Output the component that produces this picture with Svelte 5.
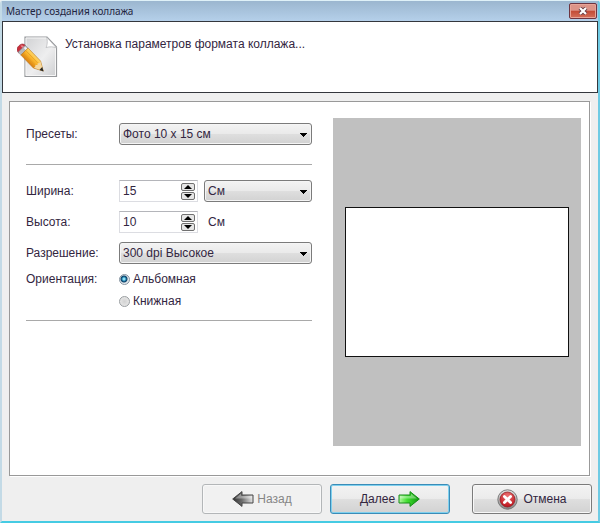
<script>
  let preset = $state('photo');
  let width = $state('15');
  let height = $state('10');
  let unit = $state('cm');
  let dpi = $state('300');
  let orientation = $state('landscape');

  const step = (value, by) => String(Math.max(1, (parseInt(value) || 0) + by));
  let ratio = $derived.by(() => {
    const a = Number(width) || 1;
    const b = Number(height) || 1;
    return orientation === 'landscape' ? Math.max(a, b) / Math.min(a, b) : Math.min(a, b) / Math.max(a, b);
  });
</script>

{#snippet spinner(id, value, set)}
  <div class="spin">
    <input {id} type="text" {value} oninput={(e) => set(e.currentTarget.value)} />
    <div class="arrows">
      <button type="button" aria-label="Больше" onclick={() => set(step(value, 1))}>
        <svg width="8" height="4" viewBox="0 0 8 4"><path d="M4 0L8 4H0Z" /></svg>
      </button>
      <button type="button" aria-label="Меньше" onclick={() => set(step(value, -1))}>
        <svg width="8" height="4" viewBox="0 0 8 4"><path d="M0 0H8L4 4Z" /></svg>
      </button>
    </div>
  </div>
{/snippet}

<div class="window">
  <div class="titlebar">
    <span>Мастер создания коллажа</span>
    <button class="close" type="button" aria-label="Закрыть">
      <svg width="10" height="8" viewBox="0 0 10 8">
        <path d="M2 1L8 7M8 1L2 7" stroke="#6b3d42" stroke-width="4" />
        <path d="M2 1L8 7M8 1L2 7" stroke="#fff" stroke-width="2.2" />
      </svg>
    </button>
  </div>

  <header>
    <svg width="42" height="42" viewBox="0 0 42 42" aria-hidden="true">
      <defs>
        <linearGradient id="sheet" x1="0" y1="0" x2="1" y2="1">
          <stop offset="0" stop-color="#d0d1d3" />
          <stop offset=".55" stop-color="#eeeeef" />
          <stop offset="1" stop-color="#cdced0" />
        </linearGradient>
        <linearGradient id="wood" x1="0" y1="0" x2="0" y2="1">
          <stop offset="0" stop-color="#ffd76a" />
          <stop offset=".45" stop-color="#fbb62c" />
          <stop offset="1" stop-color="#d97e0e" />
        </linearGradient>
      </defs>
      <path d="M8 1H30L39.500 11V40.500H8Z" fill="url(#sheet)" stroke="#96989b" stroke-width="1.2" />
      <path d="M9 2H29.500L38.500 11.500V39.500H9Z" fill="none" stroke="#f6f6f6" />
      <path d="M29.500 1C31 5 30 10 29 11.500C33 10.500 36 10.500 39.500 12Z" fill="#fff" stroke="#b0b1b4" stroke-width=".7" />
      <g transform="translate(4 12) rotate(46)">
        <path d="M2 -5C-2 -5 -3 -3 -3 0S-2 5 2 5Z" fill="#c9303c" stroke="#94303a" stroke-width=".6" />
        <path d="M1 -3.300C-1 -3.300 -2 -2 -2 -1H1Z" fill="#ec8288" />
        <rect x="1" y="-5" width="4" height="10" fill="#b5b8bd" stroke="#85878c" stroke-width=".5" />
        <path d="M2 -3H5" stroke="#f3f3f3" stroke-width="2" />
        <path d="M5 -5H23L32 0L23 5H5Z" fill="url(#wood)" stroke="#b8761c" stroke-width=".6" />
        <path d="M5 -1.600H23M5 2H23" stroke="#e29a20" stroke-width=".7" />
        <path d="M23 -4.600L32 0L23 4.600C24 3 23 1.700 22 1.500C24 .5 24 -1 22 -1.700C24 -2 24 -3 23 -4.600Z" fill="#f5d8a1" />
        <path d="M28.500 -2L32.500 0L28.500 2Z" fill="#282828" />
      </g>
    </svg>
    <p>Установка параметров формата коллажа...</p>
  </header>

  <main>
    <form>
      <div class="row">
        <label class="name" for="preset">Пресеты:</label>
        <select id="preset" bind:value={preset}><option value="photo">Фото 10 x 15 см</option></select>
      </div>
      <hr class="first" />
      <div class="row">
        <label class="name" for="width">Ширина:</label>
        {@render spinner('width', width, (v) => (width = v))}
        <select class="unit" aria-label="Единицы" bind:value={unit}><option value="cm">См</option></select>
      </div>
      <div class="row spaced">
        <label class="name" for="height">Высота:</label>
        {@render spinner('height', height, (v) => (height = v))}
        <span class="suffix">См</span>
      </div>
      <div class="row spaced">
        <label class="name" for="dpi">Разрешение:</label>
        <select id="dpi" bind:value={dpi}><option value="300">300 dpi Высокое</option></select>
      </div>
      <div class="orient" role="radiogroup" aria-labelledby="orient">
        <span class="name" id="orient">Ориентация:</span>
        <div>
          <label class="choice"><input type="radio" value="landscape" bind:group={orientation} />Альбомная</label>
          <label class="choice"><input type="radio" value="portrait" bind:group={orientation} />Книжная</label>
        </div>
      </div>
      <hr class="last" />
    </form>
    <div class="preview">
      <div class="paper" style:aspect-ratio={ratio}></div>
    </div>
  </main>

  <footer>
    <button class="push" type="button" disabled>
      <svg width="22" height="16" viewBox="0 0 22 16" aria-hidden="true">
        <defs>
          <linearGradient id="grey" x1="0" y1="0" x2="1" y2="0">
            <stop offset="0" stop-color="#303030" />
            <stop offset=".45" stop-color="#6b6b6b" />
            <stop offset="1" stop-color="#e6e6e6" />
          </linearGradient>
        </defs>
        <path d="M.7 8L10 .6V4H21V12H10V15.400Z" fill="url(#grey)" stroke="#444" stroke-linejoin="round" />
        <path d="M3 7.500L9 2.800V5H20V7.500Z" fill="#fff" opacity=".35" />
      </svg>
      <span>Назад</span>
    </button>
    <button class="push default" type="button">
      <span>Далее</span>
      <svg width="22" height="16" viewBox="0 0 22 16" aria-hidden="true">
        <defs>
          <linearGradient id="green" x1="0" y1="0" x2="1" y2="0">
            <stop offset="0" stop-color="#b4f7a2" />
            <stop offset=".4" stop-color="#42df31" />
            <stop offset="1" stop-color="#0f960e" />
          </linearGradient>
        </defs>
        <path d="M21.300 8L12 .6V4H1V12H12V15.400Z" fill="url(#green)" stroke="#168c18" stroke-linejoin="round" />
        <path d="M19 7.500L13 2.800V5H2V7.500Z" fill="#fff" opacity=".35" />
      </svg>
    </button>
    <button class="push cancel" type="button">
      <svg width="21" height="21" viewBox="0 0 21 21" aria-hidden="true">
        <defs>
          <linearGradient id="ring" x1="0" y1="0" x2="0" y2="1">
            <stop offset="0" stop-color="#e4e4e4" />
            <stop offset="1" stop-color="#858585" />
          </linearGradient>
          <radialGradient id="red" cx=".5" cy=".25" r=".8">
            <stop offset="0" stop-color="#ee7171" />
            <stop offset="1" stop-color="#b80d18" />
          </radialGradient>
        </defs>
        <circle cx="10.500" cy="10.500" r="9.700" fill="url(#ring)" stroke="#707070" stroke-width=".9" />
        <circle cx="10.500" cy="10.500" r="7.500" fill="url(#red)" stroke="#8e1a20" stroke-width=".7" />
        <path d="M7.400 7.400L13.600 13.600M13.600 7.400L7.400 13.600" stroke="#fff" stroke-width="2.800" stroke-linecap="round" />
      </svg>
      <span>Отмена</span>
    </button>
  </footer>
</div>

<style>
  :global(body) {
    margin: 0;
    background: #efefef;
  }
  .window {
    box-sizing: border-box;
    min-height: 100vh;
    display: flex;
    flex-direction: column;
    border: solid;
    border-width: 1px 2px 2px;
    border-color: #dff1f8 #6fcbe4 #45cbe3 #c3dae6;
    border-radius: 4px 4px 0 0;
    background: #efefef;
    color: #33263f;
    font: 12px/16px "Liberation Sans", Arial, sans-serif;
  }
  button,
  input,
  select {
    font: inherit;
    color: inherit;
    margin: 0;
    box-sizing: border-box;
  }
  .titlebar {
    display: flex;
    justify-content: space-between;
    height: 20px;
    padding: 0 1px 0 4px;
    background: linear-gradient(#9bb6cf, #b5d0ea);
    color: #1f2440;
    font: 10px/20px "Noto Sans", "Open Sans", sans-serif;
  }
  .close {
    width: 28px;
    height: 16px;
    margin-top: 2px;
    padding: 0;
    display: grid;
    place-items: center;
    border: 1px solid #6d3540;
    border-radius: 2px;
    box-shadow: inset 0 0 0 1px #e8a497;
    background: linear-gradient(#dc9488 45%, #c34a35 50%, #d4705a);
  }
  header {
    display: flex;
    gap: 6px;
    box-sizing: border-box;
    height: 72px;
    padding: 14px 14px 0;
    border: 1px solid #34373d;
    background: #fff;
  }
  header svg {
    flex: none;
  }
  header p {
    margin: 0;
  }
  main {
    flex: 1;
    display: flex;
    gap: 21px;
    margin: 8px 8px 0 7px;
    padding: 16px 8px 29px 16px;
    border: 1px solid #999;
    box-shadow: 1px 1px #fff;
    background: #fff;
  }
  form {
    flex: 286 286 286px;
    min-width: 0;
    padding-top: 5px;
  }
  .row {
    display: flex;
    align-items: center;
    height: 22px;
  }
  .spaced {
    margin-top: 9px;
  }
  .name {
    flex: none;
    width: 93px;
  }
  select {
    flex: 1;
    min-width: 0;
    height: 22px;
    padding: 0 3px;
    appearance: none;
    border: 1px solid #7b7b7b;
    border-radius: 3px;
    background:
      linear-gradient(#000, #000) right 4px top 9px / 7px 1px no-repeat,
      linear-gradient(#000, #000) right 5px top 10px / 5px 1px no-repeat,
      linear-gradient(#000, #000) right 6px top 11px / 3px 1px no-repeat,
      linear-gradient(#000, #000) right 7px top 12px / 1px 1px no-repeat,
      linear-gradient(#f3f3f3, #eaeaea 48%, #dedede 52%, #d2d2d2);
    box-shadow: inset 0 0 0 1px #f5f5f5;
  }
  .unit {
    margin-left: 6px;
  }
  .suffix {
    margin-left: 10px;
  }
  hr {
    height: 1px;
    border: 0;
    background: #a9a9a9;
  }
  .first {
    margin: 19px 0 15px;
  }
  .last {
    margin: 8px 0 0;
  }
  .spin {
    display: flex;
    box-sizing: border-box;
    width: 79px;
    height: 22px;
    border: 1px solid #dcdde2;
    border-top-color: #b4b5ba;
  }
  .spin input {
    flex: 1;
    min-width: 0;
    padding: 0 3px;
    border: 0;
    outline: 0;
    background: none;
  }
  .arrows {
    display: flex;
    flex-direction: column;
    gap: 1px;
    padding: 2px 2px 0 0;
  }
  .arrows button {
    display: grid;
    place-items: center;
    width: 14px;
    height: 8px;
    padding: 0;
    border: 1px solid #707070;
    border-radius: 2px;
    background: #e6e6e6;
  }
  .orient {
    display: flex;
    margin-top: 4px;
    line-height: 22px;
  }
  .choice {
    display: flex;
    align-items: center;
    gap: 3px;
    height: 22px;
  }
  .choice input {
    width: 11px;
    height: 11px;
    appearance: none;
    border: 1px solid #9a9ea1;
    border-radius: 50%;
    background: radial-gradient(#d2d2d2, #ededed);
  }
  .choice input:checked {
    border-color: #8593a0;
    background: radial-gradient(circle at 4px 4px, #8fe0f6 0 1px, #1a7ba8 2px, #0f3f66 3px, #e2e8ec 4px);
  }
  .preview {
    flex: 248 248 248px;
    min-width: 0;
    box-sizing: border-box;
    display: grid;
    align-items: center;
    padding: 0 12px;
    background: #c0c0c0;
  }
  .paper {
    box-sizing: border-box;
    width: 100%;
    border: 1px solid #111;
    background: #fff;
  }
  footer {
    display: flex;
    justify-content: flex-end;
    gap: 8px;
    padding: 8px 6px 7px;
  }
  .push {
    display: flex;
    align-items: center;
    justify-content: center;
    gap: 3px;
    width: 120px;
    height: 30px;
    padding: 0;
    border: 1px solid #7b7b7b;
    border-radius: 3px;
    box-shadow: inset 0 0 0 1px #f8f8f8;
    background: linear-gradient(#f3f3f3, #ebebeb 48%, #dedede 52%, #d2d2d2);
  }
  .push:disabled {
    border-color: #b3b6b8;
    background: #f1f1f1;
    color: #858585;
  }
  .default {
    border-color: #3a8cb8;
    box-shadow: inset 0 0 0 1px #7fd0ee;
  }
  .cancel {
    margin-left: 14px;
    gap: 5px;
  }
</style>
